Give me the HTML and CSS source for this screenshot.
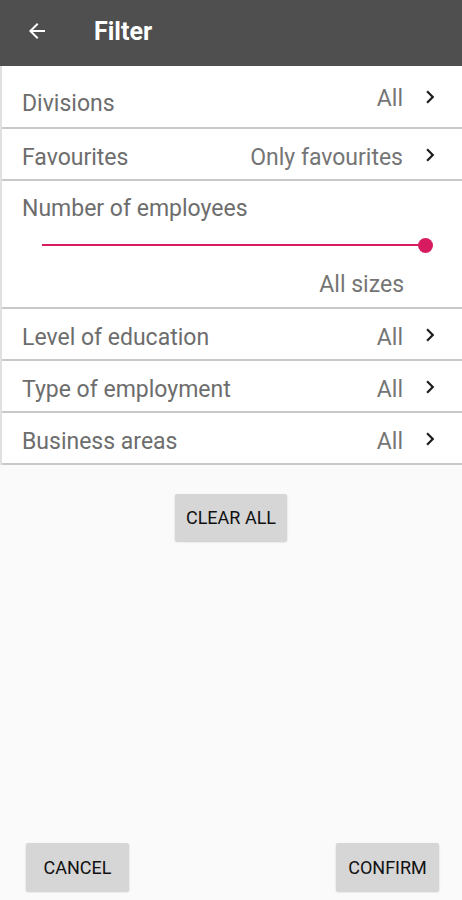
FILE: index.html
```html
<!DOCTYPE html>
<html lang="en">
<head>
  <meta charset="UTF-8">
  <title>Filter</title>
  <link rel="stylesheet" href="styles.css">
</head>
<body>

  <div class="topbar">
    <svg class="back" width="24" height="24" viewBox="0 0 24 24"><path d="M20 11H7.83l5.59-5.59L12 4l-8 8 8 8 1.41-1.41L7.83 13H20v-2z" fill="#fff"/></svg>
    <h1>Filter</h1>
  </div>

  <div class="list">
    <div class="row first">
      <span class="label">Divisions</span>
      <span class="value">All</span>
      <svg class="chev" width="24" height="24" viewBox="0 0 24 24"><path d="M10 6L8.59 7.41 13.17 12l-4.58 4.59L10 18l6-6z"/></svg>
    </div>
    <div class="row">
      <span class="label">Favourites</span>
      <span class="value">Only favourites</span>
      <svg class="chev" width="24" height="24" viewBox="0 0 24 24"><path d="M10 6L8.59 7.41 13.17 12l-4.58 4.59L10 18l6-6z"/></svg>
    </div>
    <div class="row slider-row">
      <span class="label">Number of employees</span>
      <div class="slider">
        <div class="track"></div>
        <div class="thumb"></div>
      </div>
      <span class="value sizes">All sizes</span>
    </div>
    <div class="row">
      <span class="label">Level of education</span>
      <span class="value">All</span>
      <svg class="chev" width="24" height="24" viewBox="0 0 24 24"><path d="M10 6L8.59 7.41 13.17 12l-4.58 4.59L10 18l6-6z"/></svg>
    </div>
    <div class="row">
      <span class="label">Type of employment</span>
      <span class="value">All</span>
      <svg class="chev" width="24" height="24" viewBox="0 0 24 24"><path d="M10 6L8.59 7.41 13.17 12l-4.58 4.59L10 18l6-6z"/></svg>
    </div>
    <div class="row">
      <span class="label">Business areas</span>
      <span class="value">All</span>
      <svg class="chev" width="24" height="24" viewBox="0 0 24 24"><path d="M10 6L8.59 7.41 13.17 12l-4.58 4.59L10 18l6-6z"/></svg>
    </div>
  </div>

  <div class="middle">
    <button class="btn">Clear all</button>
  </div>

  <div class="footer">
    <button class="btn wide">Cancel</button>
    <button class="btn wide">Confirm</button>
  </div>

</body>
</html>
```

FILE: styles.css
```css
html, body {
  margin: 0;
  height: 900px;
}
body {
  font-family: Roboto, "Noto Sans", Arial, sans-serif;
  background-color: #fafafa;
  display: flex;
  flex-direction: column;
  overflow: hidden;
}
.topbar {
  height: 62px;
  padding: 0 0 4px 25px;
  background-color: #4f4f4f;
  display: flex;
  align-items: center;
  flex-shrink: 0;
}
.topbar .back {
  width: 24px;
  height: 24px;
}
.topbar h1 {
  margin: 0 0 0 45px;
  color: #fff;
  font-size: 25px;
  font-weight: 700;
}
.list {
  background-color: #fff;
  border-left: 2px solid #e0e0e0;
  flex-shrink: 0;
}
.row {
  display: flex;
  align-items: center;
  height: 44px;
  padding: 6px 0 0 20px;
  border-bottom: 2px solid #c9c9c9;
  font-size: 23px;
  line-height: 27px;
  color: #6d6d6d;
}
.row.first {
  height: 57px;
  padding-top: 4px;
}
.row.first .label {
  margin-top: 10px;
}
.label {
  flex: 1;
}
.value {
  color: #757575;
}
.chev {
  width: 26px;
  height: 26px;
  margin: -4px 19px 0 14px;
  fill: #1c1c1c;
}
.slider-row {
  height: auto;
  flex-wrap: wrap;
  padding-top: 14px;
  padding-bottom: 9px;
}
.slider-row .label {
  flex-basis: 100%;
}
.slider {
  position: relative;
  flex-basis: 100%;
  height: 40px;
  margin-left: 20px;
  margin-right: 36px;
}
.track {
  position: absolute;
  left: 0;
  right: 0;
  top: 22px;
  height: 2px;
  background-color: #d81b60;
}
.thumb {
  position: absolute;
  right: -7px;
  top: 16px;
  width: 15px;
  height: 15px;
  border-radius: 50%;
  background-color: #d81b60;
}
.sizes {
  margin-left: auto;
  margin-right: 58px;
  margin-top: 9px;
}
.row.last-gap {
  height: 45px;
}
.middle {
  display: flex;
  justify-content: center;
  padding-top: 29px;
  flex: 1;
}
.btn {
  height: 47px;
  padding: 0 11px;
  border: none;
  border-radius: 2px;
  background-color: #d6d6d6;
  box-shadow: 0 1px 2px rgba(0, 0, 0, 0.2);
  font-family: Roboto, "Noto Sans", Arial, sans-serif;
  font-size: 18px;
  font-weight: 400;
  text-transform: uppercase;
  color: #111;
}
.wide {
  width: 103px;
  height: 48px;
}
.footer {
  display: flex;
  justify-content: space-between;
  padding: 0 23px 9px 26px;
}
```
